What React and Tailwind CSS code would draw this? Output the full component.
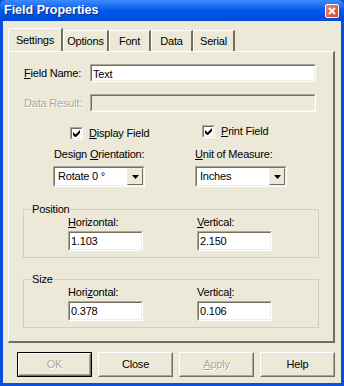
const sunken =
  "border border-t-[#ACA899] border-l-[#ACA899] border-r-white border-b-white";

function Field({ value, className = "", disabled = false }) {
  return (
    <div className={`${sunken} ${className}`}>
      <div
        className={`h-full border border-t-[#716F64] border-l-[#716F64] border-r-[#F1EFE2] border-b-[#F1EFE2] pl-[1px] leading-[16px] ${
          disabled ? "bg-[#ECE9D8]" : "bg-white"
        }`}
      >
        {value}
      </div>
    </div>
  );
}

function Check({ u, rest }) {
  return (
    <div className="flex items-center gap-[6px]">
      <div className={`${sunken} w-[13px] h-[13px]`}>
        <div className="w-full h-full border border-t-[#716F64] border-l-[#716F64] border-r-[#F1EFE2] border-b-[#F1EFE2] bg-white flex items-center justify-center">
          <svg width="7" height="7" viewBox="0 0 7 7">
            <path d="M0 2v3l2 2h1l4-4V0L2.5 4.5z" fill="#000" />
          </svg>
        </div>
      </div>
      <span>
        <span className="underline">{u}</span>
        {rest}
      </span>
    </div>
  );
}

function Select({ value }) {
  return (
    <div className={`${sunken} w-[92px] h-[21px]`}>
      <div className="h-full border border-t-[#716F64] border-l-[#716F64] border-r-[#F1EFE2] border-b-[#F1EFE2] bg-white flex items-center justify-between">
        <span className="pl-[3px]">{value}</span>
        <div className="w-[16px] h-[17px] border border-t-[#F1EFE2] border-l-[#F1EFE2] border-r-[#716F64] border-b-[#716F64] bg-[#ECE9D8] flex items-center justify-center">
          <svg width="7" height="4" viewBox="0 0 7 4">
            <path d="M0 0h7L3.5 4z" fill="#000" />
          </svg>
        </div>
      </div>
    </div>
  );
}

function Button({ children, disabled, def }) {
  return (
    <div className={`w-[75px] h-[25px] ${def ? "border border-black" : ""}`}>
      <div className="h-full border border-t-white border-l-white border-r-[#716F64] border-b-[#716F64]">
        <div className="h-full border border-t-[#ECE9D8] border-l-[#ECE9D8] border-r-[#ACA899] border-b-[#ACA899] flex items-center justify-center">
          <span
            className={
              disabled ? "text-[#ACA899] [text-shadow:1px_1px_0_#fff]" : ""
            }
          >
            {children}
          </span>
        </div>
      </div>
    </div>
  );
}

function Group({ title, u1, r1, u2, r2, h, v, l1, l2 }) {
  return (
    <div className="relative mx-[14px] h-[49px] border border-[#D0D0BF] mt-[7px]">
      <span className="absolute -top-[8px] left-[7px] bg-[#ECE9D8] px-[1px] leading-[14px]">
        {title}
      </span>
      <div className="flex pl-[44px] pt-[5px] gap-[54px]">
        <div>
          <div className="leading-[14px] mb-[2px]">
            {l1}
            <span className="underline">{u1}</span>
            {r1}
          </div>
          <Field value={h} className="w-[75px] h-[20px]" />
        </div>
        <div>
          <div className="leading-[14px] mb-[2px]">
            {l2}
            <span className="underline">{u2}</span>
            {r2}
          </div>
          <Field value={v} className="w-[75px] h-[20px]" />
        </div>
      </div>
    </div>
  );
}

export default function App() {
  return (
    <div
      className="w-[344px] h-[386px] bg-[#0A4FE0] flex flex-col text-[11px] text-black tracking-[-0.2px]"
      style={{ fontFamily: '"Liberation Sans", Arial, sans-serif' }}
    >
      <div className="h-[21px] flex items-center justify-between pl-[4px] pr-[5px] bg-gradient-to-b from-[#3D8BFF] via-[#0058EE] to-[#0049D8] rounded-t-[6px]">
        <span className="text-white font-bold text-[12.5px] tracking-[0px] [text-shadow:1px_1px_0_#0A2A8A]">
          Field Properties
        </span>
        <div className="w-[14px] h-[14px] mt-[1px] rounded-[2px] border border-white bg-gradient-to-br from-[#E88A6E] to-[#D6401E] flex items-center justify-center">
          <svg width="8" height="8" viewBox="0 0 8 8">
            <path d="M1 1l6 6M7 1L1 7" stroke="#fff" strokeWidth="2" />
          </svg>
        </div>
      </div>
      <div className="flex-1 mx-[3px] mb-[3px] bg-[#ECE9D8] flex flex-col pt-[7px]">
        <div className="flex items-end ml-[5px] h-[23px] relative z-10">
          <div className="w-[55px] h-[23px] bg-[#ECE9D8] border-t border-l border-white border-r-2 border-r-[#716F64] flex items-center justify-center rounded-tl-[2px]">
            Settings
          </div>
          {["Options", "Font", "Data", "Serial"].map((t, i) => (
            <div
              key={t}
              className={`h-[21px] border-t border-l border-white border-r-2 border-r-[#716F64] flex items-center justify-center ${
                ["w-[46px]", "w-[42px]", "w-[42px]", "w-[42px]"][i]
              }`}
            >
              {t}
            </div>
          ))}
        </div>
        <div className="ml-[5px] w-[327px] h-[292px] border-l border-t border-white border-r-2 border-r-[#716F64] border-b-2 border-b-[#716F64] flex flex-col">
          <div className="flex items-center mt-[12px] h-[18px]">
            <span className="w-[81px] pl-[15px]">
              <span className="underline">F</span>ield Name:
            </span>
            <Field value="Text" className="w-[226px] h-[18px]" />
          </div>
          <div className="flex items-center mt-[12px] h-[18px]">
            <span className="w-[81px] pl-[15px] text-[#ACA899] [text-shadow:1px_1px_0_#fff]">
              Data Result:
            </span>
            <Field value="" disabled className="w-[226px] h-[18px]" />
          </div>
          <div className="flex mt-[13px] h-[13px]">
            <div className="w-[193px] pl-[61px]">
              <Check u="D" rest="isplay Field" />
            </div>
            <Check u="P" rest="rint Field" />
          </div>
          <div className="flex mt-[9px]">
            <div className="w-[142px] ml-[44px] flex flex-col">
              <div className="leading-[14px] pl-[1px] mb-[5px]">
                Design <span className="underline">O</span>rientation:
              </div>
              <Select value="Rotate 0 °" />
            </div>
            <div className="flex flex-col">
              <div className="leading-[14px] mb-[5px]">
                <span className="underline">U</span>nit of Measure:
              </div>
              <Select value="Inches" />
            </div>
          </div>
          <div className="mt-[15px]">
            <Group
              title="Position"
              u1="H"
              r1="orizontal:"
              u2="V"
              r2="ertical:"
              l1=""
              l2=""
              h="1.103"
              v="2.150"
            />
          </div>
          <div className="mt-[14px]">
            <Group
              title="Size"
              l1="Hori"
              u1="z"
              r1="ontal:"
              l2="Vertica"
              u2="l"
              r2=":"
              h="0.378"
              v="0.106"
            />
          </div>
        </div>
        <div className="flex ml-[14px] mt-[9px] gap-[6px]">
          <Button def disabled>
            OK
          </Button>
          <Button>Close</Button>
          <Button disabled>
            <span className="underline">A</span>pply
          </Button>
          <Button>Help</Button>
        </div>
      </div>
    </div>
  );
}
